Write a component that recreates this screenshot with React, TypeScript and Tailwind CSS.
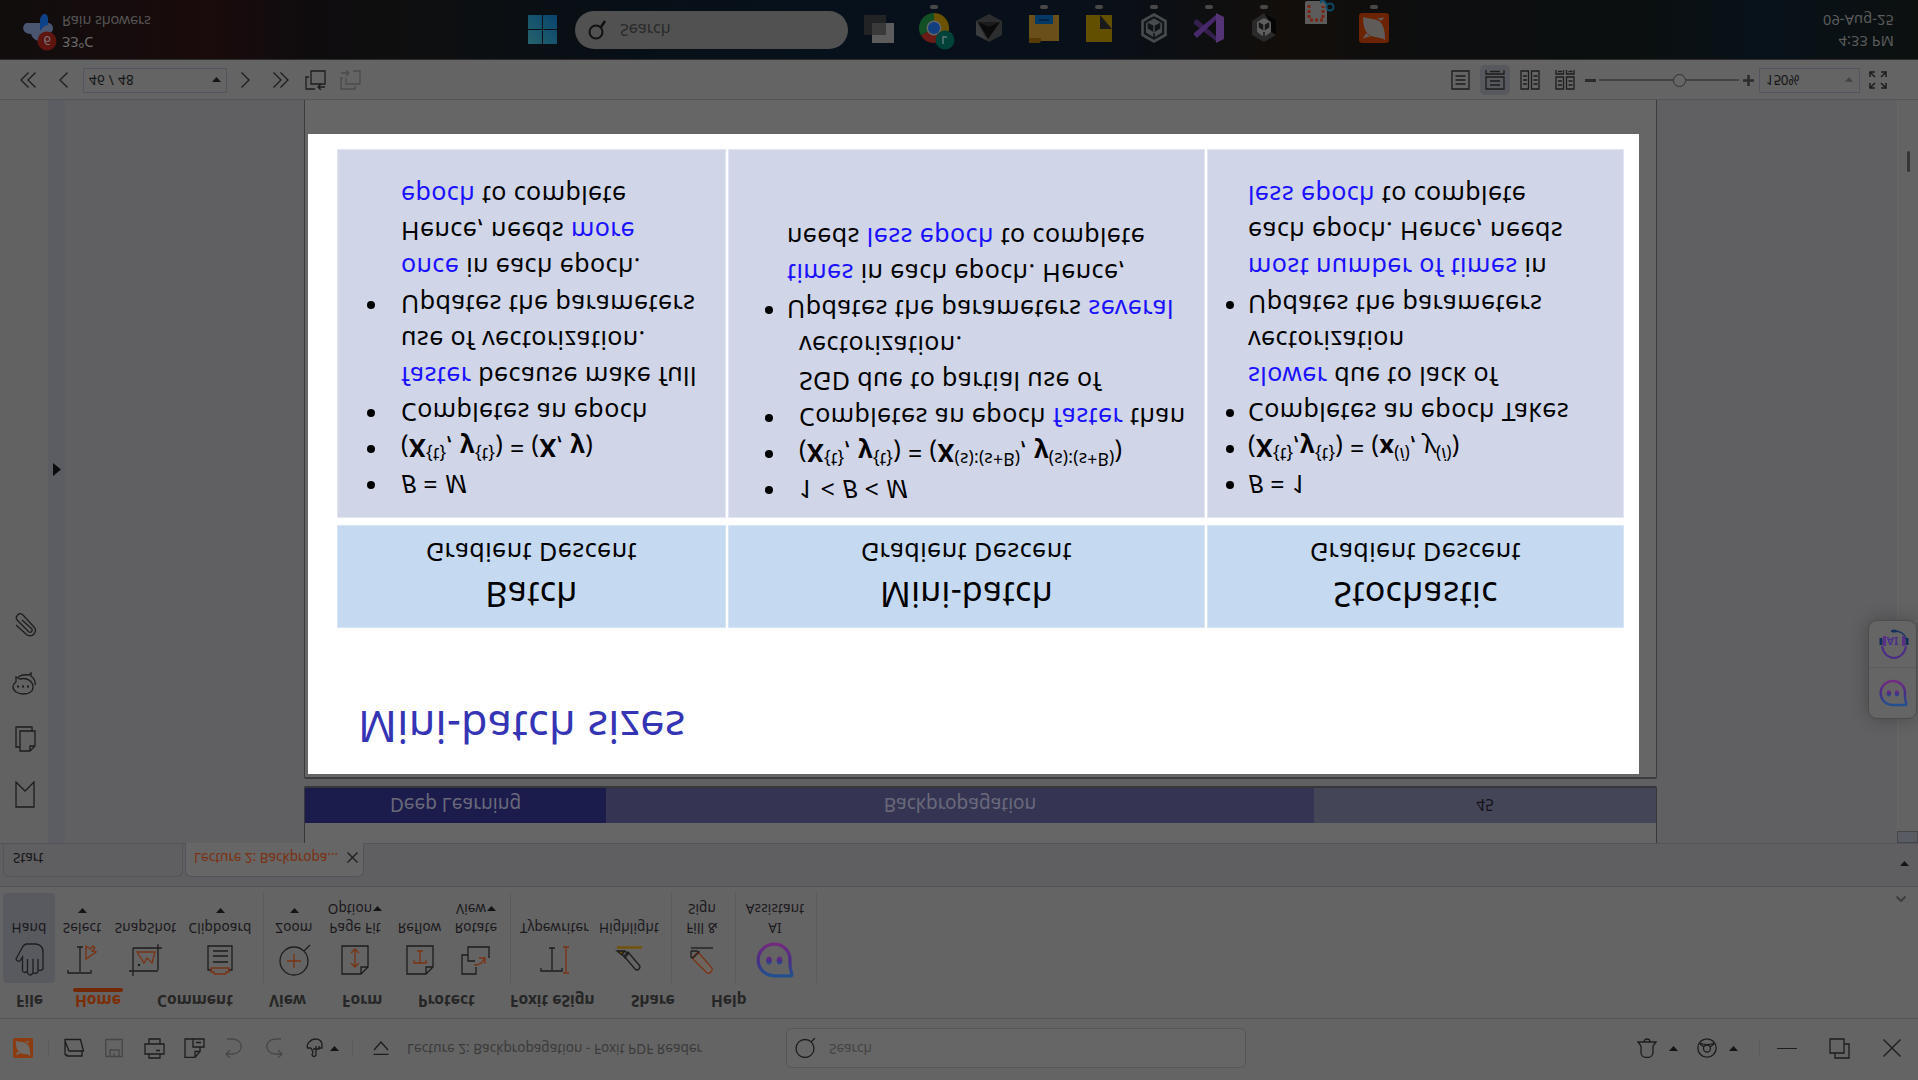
import React from "react";

type P = { children?: React.ReactNode };

/* Icons are drawn in display orientation, so they cancel the mirroring of the page. */
function Ico({ className, box, children }: P & { className: string; box: string }) {
  return (
    <svg className={"shrink-0 -scale-y-100 " + className} viewBox={box} fill="none" stroke="#1d1d1d" strokeWidth="1.3">
      {children}
    </svg>
  );
}

const Up = ({ className = "" }: { className?: string }) => (
  <Ico className={"h-[5px] w-[9px] " + className} box="0 0 9 5">
    <path d="M0 5 4.5 0 9 5Z" fill="#141414" stroke="none" />
  </Ico>
);

const Rule = ({ className = "" }: { className?: string }) => <div className={"w-px shrink-0 bg-[#5a5a5e] " + className} />;

function Bubble({ className, id }: { className: string; id: string }) {
  return (
    <Ico className={className} box="0 0 38 36">
      <defs>
        <linearGradient id={id} x1="0" y1="0" x2="0" y2="1">
          <stop offset="0" stopColor="#722a80" />
          <stop offset="0.5" stopColor="#4a2c86" />
          <stop offset="1" stopColor="#22508f" />
        </linearGradient>
      </defs>
      <path d="M18.5 2.2C27 2.2 34 9 34 17.5c0 4-.3 7 .8 10.500l1 4.500c.2 1-.3 1.300-1.300 1.300H18.500C9.500 33.800 2.200 27 2.200 18S9.500 2.200 18.500 2.200Z" stroke={"url(#" + id + ")"} strokeWidth="3.2" />
      <ellipse cx="13" cy="18.500" rx="2.800" ry="4" fill={"url(#" + id + ")"} stroke="none" />
      <ellipse cx="23.500" cy="18.500" rx="2.800" ry="4" fill={"url(#" + id + ")"} stroke="none" />
    </Ico>
  );
}

function FoxLogo({ className, bg, fg }: { className: string; bg: string; fg: string }) {
  return (
    <Ico className={className} box="0 0 30 30">
      <rect width="30" height="30" rx="3" fill={bg} stroke="none" />
      <path d="M4 4C4 13 6 20 12 23c5 2 10 1 14 4 0-9-1-15-6-19C15 5 9 6 4 4Z" fill={fg} stroke="none" />
      <path d="M4 26c1-3 2-5 4-6 1 2 2 3 4 4-3 0-5 0-8 2ZM25 4c-1 3-2 3-3 4-1-1-2-2-4-3 3 0 5 0 7-1Z" fill={fg} stroke="none" />
    </Ico>
  );
}

/* ---------- title bar ---------- */
function TitleBar() {
  return (
    <header className="flex h-[62px] items-center border-b border-[#55555d] bg-[#646464] pt-[2px]">
      <FoxLogo className="ml-[13px] h-5 w-5" bg="#8c3a10" fg="#6f6a66" />
      <Rule className="ml-[15px] h-4" />
      <Ico className="ml-[15px] h-5 w-5" box="0 0 20 20">
        <path d="M1 17V1.500h15.500L19.500 13H5L1 3M1 17h2v1h15v-5" />
      </Ico>
      <Ico className="ml-[21px] h-5 w-[18px]" box="0 0 18 20">
        <path d="M.8 1.500h16.400v17H.8ZM5 18v-6h9v6M9 15v3" stroke="#464646" />
      </Ico>
      <Ico className="ml-[21px] h-[21px] w-[21px]" box="0 0 21 21">
        <path d="M5 6V1h11v5M5 6h11M5 6H1v10h4m11 0h4V6h-4M5 16h11v4H5ZM12 12.500h4" />
      </Ico>
      <Ico className="ml-[19px] h-5 w-[21px]" box="0 0 21 20">
        <path d="M9 1H1v18.500h10l5-6h-5v6M9 1h11v8H9ZM16 13v-4M12 4.500h5" />
      </Ico>
      <Ico className="ml-[20px] h-5 w-[18px]" box="0 0 18 20">
        <path d="M2 1h6c11 1 11 14 0 15H1M5 12l-4 4 4 4" stroke="#474747" />
      </Ico>
      <Ico className="ml-[22px] h-5 w-[18px]" box="0 0 18 20">
        <path d="M16 1h-6C-1 2-1 15 10 16h7M13 12l4 4-4 4" stroke="#474747" />
      </Ico>
      <Ico className="ml-[23px] h-5 w-[17px]" box="0 0 17 20">
        <path d="M5 10H1.500C0 6 5 1 9 1c5 0 7 3 7 6v3h-3V8v3H10V8v3H7M5 10l2 4-1 3c1 2 3 2 4 0v-6" />
      </Ico>
      <Up className="ml-[7px]" />
      <Rule className="ml-[13px] h-4" />
      <Ico className="ml-[20px] h-[14px] w-[16px]" box="0 0 16 14">
        <path d="M1 9 8 1l7 8M.5 13.300h15" />
      </Ico>
      <div className="ml-[18px] w-[379px] text-[13.500px] tracking-[0.05px] text-[#3b3b3b]">Lecture 2: Backpropagation - Foxit PDF Reader</div>
      <div className="flex h-10 w-[460px] items-center rounded-[5px] border border-[#55555d] bg-[#666]">
        <Ico className="ml-[8px] h-5 w-[21px]" box="0 0 21 20">
          <circle cx="10" cy="10.500" r="9" />
          <path d="m16 4 4-4" />
        </Ico>
        <span className="ml-[13px] text-[13.500px] text-[#444]">Search</span>
      </div>
      <Ico className="ml-[391px] h-5 w-5" box="0 0 20 20">
        <path d="M1 4h18l-3 4v7c-1 6-11 6-12 0V8ZM7 4c0-4 6-4 6 0" />
      </Ico>
      <Up className="ml-[12px]" />
      <Ico className="ml-[19px] h-5 w-5" box="0 0 20 20">
        <circle cx="10" cy="10" r="9.200" />
        <circle cx="10" cy="10.500" r="3.500" />
        <path d="M3 5c4 2 10 2 14 0M3 6l4 3M17 6l-4 3" />
      </Ico>
      <Up className="ml-[12px]" />
      <Rule className="ml-[21px] h-4" />
      <div className="ml-[17px] h-px w-5 bg-[#1d1d1d]" />
      <Ico className="ml-[32px] h-[21px] w-[21px]" box="0 0 21 21">
        <path d="M1 1h14v14H1ZM15 6h5v14H6v-5" />
      </Ico>
      <Ico className="ml-[33px] h-[18px] w-[18px]" box="0 0 18 18">
        <path d="m.5.5 17 17M17.500.500.500 17.500" />
      </Ico>
    </header>
  );
}

/* ---------- menu and ribbon ---------- */
const menu: [string, string][] = [
  ["File", "w-[59px]"],
  ["Home", "w-[82px]"],
  ["Comment", "w-[112px]"],
  ["View", "w-[73px]"],
  ["Form", "w-[76px]"],
  ["Protect", "w-[92px]"],
  ["Foxit eSign", "w-[121px]"],
  ["Share", "w-[80px]"],
  ["Help", "w-[60px]"],
];

function Tool({ w, l1, l2, arrow, children, active }: P & { w: string; l1: string; l2?: string; arrow?: boolean; active?: boolean }) {
  return (
    <div className={"flex h-[90px] shrink-0 flex-col items-center rounded-[4px] " + w + (active ? " bg-[#595a60]" : "")}>
      <div className="mt-[5px] flex h-9 items-center justify-center">{children}</div>
      <div className="mt-[5px] whitespace-nowrap text-[13.500px] leading-[19px] tracking-[0.15px]">{l1}</div>
      <div className="flex h-[19px] items-center whitespace-nowrap text-[13.500px] leading-[19px] tracking-[0.15px]">
        {l2}
        {arrow && <Up className={l2 ? "ml-px" : "mb-[4px]"} />}
      </div>
    </div>
  );
}

const T = "h-9 w-9";
const B = "0 0 36 36";
const O = "#7a3213";

function Ribbon() {
  return (
    <section className="flex h-[132px] flex-col border-b border-[#515156] bg-[#646464]">
      <nav className="flex h-[35px] pl-4 text-[15.500px] font-bold leading-[34px] text-[#262626]">
        {menu.map(([t, w]) => (
          <div key={t} className={"shrink-0 whitespace-nowrap " + w}>
            {t === "Home" ? (
              <span className="relative block text-[#7c2d06]">
                Home
                <i className="absolute -left-[2px] top-[26px] h-[4px] w-[50px] rounded-full bg-[#732805]" />
              </span>
            ) : (
              t
            )}
          </div>
        ))}
      </nav>
      <div className="flex pl-[3px] text-[#1a181c]">
        <Tool w="w-[52px]" l1="Hand" active>
          <Ico className={T} box={B}>
            <path d="m5 17 6-11q2-4 5-4h9q7 1 7 8v17q-3 3-5 0V17v13q-3 3-5 0V17v14q-3 4-5.500 0V17v12q-3 3-5 0V15l-2.500 4q-3 1-4-2Z" />
          </Ico>
        </Tool>
        <Tool w="w-[54px]" l1="Select" arrow>
          <Ico className={T} box={B}>
            <path d="M16 5v25M13 5h6M4 28v3h23v-3" />
            <path d="M22 4v13l10-7-4-1 3-3-2-2-3 3Z" stroke={O} />
          </Ico>
        </Tool>
        <Tool w="w-[73px]" l1="SnapShot">
          <Ico className={T} box={B}>
            <path d="M5 6h29M5 6v28M30 2v26M1 29h29" />
            <path d="M9 10h18l-3 11-5-5-3 5Z" stroke={O} />
            <circle cx="11" cy="23" r="1.200" fill="#1d1d1d" stroke="none" />
          </Ico>
        </Tool>
        <Tool w="w-[76px]" l1="Clipboard" arrow>
          <Ico className={T} box={B}>
            <path d="M10 28H6V4h24v24h-4M11 9h15M11 14h15M11 20h15" />
            <path d="M9 26h18v4h-3v2H12v-2H9Z" stroke={O} />
          </Ico>
        </Tool>
        <Rule className="mr-[3px] ml-[5px] h-[90px]" />
        <Tool w="w-[54px]" l1="Zoom" arrow>
          <Ico className={T} box={B}>
            <circle cx="18" cy="19" r="14" />
            <path d="m28 9 6-6" />
            <path d="M11 19h14M18 12v14" stroke={O} />
          </Ico>
        </Tool>
        <Tool w="w-[68px]" l1="Page Fit" l2="Option" arrow>
          <Ico className={T} box={B}>
            <path d="M5 4h26v21l-7 7H5ZM24 32v-7h7" />
            <path d="M18 7v18M14 11l4-4 4 4M14 21l4 4 4-4" stroke={O} />
          </Ico>
        </Tool>
        <Tool w="w-[61px]" l1="Reflow">
          <Ico className={T} box={B}>
            <path d="M5 4h26v21l-7 7H5ZM24 32v-7h7" />
            <path d="M18 9v12M15 9h6M12 18v3h12v-3" stroke={O} />
          </Ico>
        </Tool>
        <Tool w="w-[52px]" l1="Rotate" l2="View" arrow>
          <Ico className={T} box={B}>
            <path d="M31 16V5H10v14h7M10 13H4v19h14v-7" />
            <path d="M16 23q8 0 10-6M21 16h6v6" stroke={O} />
          </Ico>
        </Tool>
        <Rule className="mr-[6px] ml-[8px] h-[90px]" />
        <Tool w="w-[75px]" l1="Typewriter">
          <Ico className={T} box={B}>
            <path d="M15 6v22M12 6h6M4 26v3h21v-3" />
            <path d="M29 5v26M26 5h6M26 31h6" stroke={O} />
          </Ico>
        </Tool>
        <Tool w="w-[74px]" l1="Highlight">
          <Ico className={T} box={B}>
            <path d="M6 5.500h25" stroke="#735206" strokeWidth="2.400" />
            <path d="m13 14 4-4 11 13q2 2 0 4t-4 0ZM11 12l3-3 3 3-3 4Z" />
            <path d="m6 9 7 0-2 4Z" fill="#6b4a06" />
          </Ico>
        </Tool>
        <Rule className="mr-[5px] ml-[5px] h-[90px]" />
        <Tool w="w-[50px]" l1="Fill &amp;" l2="Sign">
          <Ico className={T} box={B}>
            <path d="M7 6h22" />
            <path d="m8 16 6-6 14 16q1 2-1 4t-4 1Z" stroke={O} fill="#6e655f" />
            <path d="M7 9h6M7 9v6l2 1 6-6-2-1" />
          </Ico>
        </Tool>
        <Rule className="mr-[4px] ml-[8px] h-[90px]" />
        <Tool w="w-[70px]" l1="AI" l2="Assistant">
          <Bubble className="h-9 w-[38px]" id="bubbleRibbon" />
        </Tool>
        <Rule className="ml-[6px] h-[90px]" />
        <Ico className="mt-[81px] ml-[1079px] h-[6px] w-[10px]" box="0 0 10 6">
          <path d="m.500.500 4.500 4.500L9.500.500" stroke="#3d3d3d" strokeWidth="2" />
        </Ico>
      </div>
    </section>
  );
}

function DocTabs() {
  return (
    <div className="flex h-[43px] items-end border-b border-[#535358] bg-[#5f5f61] pl-[3px] text-[13.500px]">
      <div className="h-[33px] w-[180px] rounded-t-[6px] border border-b-0 border-[#53535c] pl-[9px] leading-[37px] text-[#151517]">Start</div>
      <div className="-mb-px ml-[2px] flex h-[34px] w-[179px] items-center rounded-t-[6px] border border-b-0 border-[#53535c] bg-[#666] pt-[4px] pl-[8px] text-[#7c3010]">
        <span className="w-[153px] whitespace-nowrap">Lecture 2: Backpropa...</span>
        <Ico className="h-[11px] w-[11px]" box="0 0 11 11">
          <path d="m.5.5 10 10M10.500.500.500 10.500" />
        </Ico>
      </div>
      <Up className="mb-[17px] ml-[1536px]" />
    </div>
  );
}

/* ---------- slide ---------- */
const Em = ({ children }: P) => <span className="text-[#1a10ff]">{children}</span>;
const Sup = ({ children }: P) => <span className="align-[9px] text-[17.500px] leading-[0] tracking-[0.2px]">{children}</span>;

function Item({ children, pad = "" }: P & { pad?: string }) {
  return (
    <li className={"flex " + pad}>
      <i className="mt-[13.500px] h-[8px] w-[8px] shrink-0 rounded-full bg-black" />
      <div className="whitespace-nowrap">{children}</div>
    </li>
  );
}

function Head({ name }: { name: string }) {
  return (
    <div className="flex flex-col items-center border border-[#d7e5f5] bg-[#c5d9f0] pt-[10px]">
      <div className="text-[34px] leading-[44px] tracking-[0.3px]">{name}</div>
      <div className="text-[25px] leading-[41px] tracking-[0.45px]">Gradient Descent</div>
    </div>
  );
}

function Slide() {
  return (
    <div className="h-[640px] w-[1331px] bg-white text-black">
      <h1 className="h-[146px] pt-[20px] pl-[50px] text-[43px] leading-[54px] tracking-[0.3px] text-[#3434b4]">Mini-batch sizes</h1>
      <div className="ml-[29px] grid grid-cols-[389px_477px_417px] grid-rows-[103px_369px] gap-x-[2px] gap-y-[7px]">
        <Head name="Batch" />
        <Head name="Mini-batch" />
        <Head name="Stochastic" />
        <ul className="border border-[#e2e6f2] bg-[#d0d6e8] pt-[14px] pl-[29px] text-[25px] leading-[36.100px] tracking-[0.39px]">
          <Item><div className="ml-[26px]"><i>B</i> = <i>M</i></div></Item>
          <Item><div className="ml-[26px]">(<b>X</b><Sup>{"{t}"}</Sup>, <b>y</b><Sup>{"{t}"}</Sup>) = (<b>X</b>, <b>y</b>)</div></Item>
          <Item><div className="ml-[26px]">Completes an epoch<br /><Em>faster</Em> because make full<br />use of vectorization.</div></Item>
          <Item><div className="ml-[26px]">Updates the parameters<br /><Em>once</Em> in each epoch.<br />Hence, needs <Em>more</Em><br /><Em>epoch</Em> to complete</div></Item>
        </ul>
        <ul className="border border-[#e2e6f2] bg-[#d0d6e8] pt-[9px] pl-[36px] text-[25px] leading-[36px] tracking-[0.39px]">
          <Item><div className="ml-[26px]">1 &lt; <i>B</i> &lt; <i>M</i></div></Item>
          <Item><div className="ml-[26px]">(<b>X</b><Sup>{"{t}"}</Sup>, <b>y</b><Sup>{"{t}"}</Sup>) = (<b>X</b><Sup>(s):(s+B)</Sup>, <b>y</b><Sup>(s):(s+B)</Sup>)</div></Item>
          <Item><div className="ml-[26px]">Completes an epoch <Em>faster</Em> than<br />SGD due to partial use of<br />vectorization.</div></Item>
          <Item><div className="ml-[14px]">Updates the parameters <Em>several</Em><br /><Em>times</Em> in each epoch. Hence,<br />needs <Em>less epoch</Em> to complete</div></Item>
        </ul>
        <ul className="border border-[#e2e6f2] bg-[#d0d6e8] pt-[14px] pl-[18px] text-[25px] leading-[36.100px] tracking-[0.39px]">
          <Item><div className="ml-[14px]"><i>B</i> = 1</div></Item>
          <Item><div className="ml-[14px]">(<b>X</b><Sup>{"{t}"}</Sup>,<b>y</b><Sup>{"{t}"}</Sup>) = (<b>x</b><Sup>(<i>i</i>)</Sup>, <i>y</i><Sup>(<i>i</i>)</Sup>)</div></Item>
          <Item><div className="ml-[14px]">Completes an epoch Takes<br /><Em>slower</Em> due to lack of<br />vectorization</div></Item>
          <Item><div className="ml-[14px]">Updates the parameters<br /><Em>most number of times</Em> in<br />each epoch. Hence, needs<br /><Em>less epoch</Em> to complete</div></Item>
        </ul>
      </div>
    </div>
  );
}

function Body() {
  return (
    <main className="flex h-[743px] overflow-hidden bg-[#606062]">
      <aside className="flex w-[48px] flex-col items-center bg-[#626262] pt-[35px]">
        <Ico className="ml-[2px] h-[27px] w-5" box="0 0 20 27">
          <path d="M1 26V1l9 9 9-9v25Z" />
        </Ico>
        <Ico className="mt-[29px] ml-[3px] h-[26px] w-[21px]" box="0 0 21 26">
          <path d="M5 5h15v15l-5 5H5ZM15 25v-5h5M17 5V1H1v20h4" />
        </Ico>
        <Ico className="mt-[31px] h-[23px] w-[24px]" box="0 0 24 23">
          <path d="M4 10V5l4 2c8-2 13 3 13 8s-5 7-10 7-10-3-10-7q0-3 3-5M6 5q5-3 11-2l2-2v3q5 4 4 9" />
          <path d="M5 14.500h2M10 14.500h2M15 14.500h2" strokeWidth="2" />
        </Ico>
        <Ico className="mt-[35px] ml-[4px] h-[24px] w-[22px]" box="0 0 22 24">
          <path d="m1 12 11 10q4 2 7-1 3-4 0-7L8 2Q4-1 2 3q-2 2 1 5l11 11q2 1 3-1l0-2L7 7" />
        </Ico>
      </aside>
      <div className="flex w-[17px] items-start justify-center bg-[#5c5d62] pt-[367px]">
        <Ico className="h-[13px] w-[8px]" box="0 0 8 13">
          <path d="M0 0 8 6.500 0 13Z" fill="#0c0c0c" stroke="none" />
        </Ico>
      </div>
      <div className="ml-[239px] w-[1353px]">
        <div className="h-[57px] rounded-b-[2px] border-x border-b-2 border-[#37373b] bg-[#666] pt-[20px] text-[19px] leading-[37px] text-[#69697a]">
          <div className="flex h-[35px] text-center">
            <div className="w-[301px] bg-[#1b1b4c]">Deep Learning</div>
            <div className="w-[708px] bg-[#353553]">Backpropagation</div>
            <div className="flex-1 bg-[#454558] text-[15.500px] text-[#131318]">45</div>
          </div>
        </div>
        <div className="mt-[7px] h-[690px] rounded-t-[2px] border-x border-t-2 border-[#3c3c40] bg-[#666] pt-[3px] pl-[3px]">
          <Slide />
        </div>
      </div>
      <div className="flex-1" />
      <div className="relative flex w-[21px] flex-col items-center border-l border-[#686868] bg-[#636363]">
        <div className="-ml-px h-[12px] w-[21px] border border-[#45464c] bg-[#5a5c64]" />
        <div className="mt-[659px] h-[21px] w-[3px] rounded-full bg-[#363638]" />
        <div className="absolute top-[124px] right-px flex h-[99px] w-[49px] flex-col items-center rounded-[9px] border border-[#4c4c4e] bg-[#656565] shadow-[0_0_18px_rgba(0,0,0,0.25)]">
          <div className="flex h-[50px] items-center pl-[2px]">
            <Bubble className="h-[28px] w-[29px]" id="bubbleSide" />
          </div>
          <div className="h-px w-full bg-[#5c5c5c]" />
          <div className="relative flex flex-1 items-center pl-[2px]">
            <Ico className="h-[30px] w-[30px]" box="0 0 30 30">
              <path d="M3 17c1 7 6 12 12 12s11-5 12-12" stroke="#4c2c84" strokeWidth="2" />
              <path d="M15 2q10 0 12 8" stroke="#1b3566" strokeWidth="1.500" />
              <ellipse cx="15" cy="2" rx="3" ry="1.500" fill="#14305e" stroke="none" />
              <path d="M2 9v7M28 9v7" stroke="#122c5c" strokeWidth="3" />
              <path d="M5.500 7v10M24.500 7v10" stroke="#5c2f86" strokeWidth="3" />
            </Ico>
            <span className="absolute top-[16px] left-[10px] text-[11px] leading-[20px] font-bold text-[#4a3088]">AI</span>
          </div>
        </div>
      </div>
    </main>
  );
}

/* ---------- status bar ---------- */
function StatusBar() {
  return (
    <div className="flex h-10 items-center border-t border-[#55565a] bg-[#646464] pb-[2px] text-[13.500px] text-[#151515]">
      <Ico className="ml-5 h-4 w-4" box="0 0 16 16"><path d="M8.500.500 1 8l7.500 7.500M15.500.500 8 8l7.500 7.500" /></Ico>
      <Ico className="ml-[23px] h-4 w-[9px]" box="0 0 9 16"><path d="M8.500.500 1 8l7.500 7.500" /></Ico>
      <div className="ml-[15px] flex h-[25px] w-[144px] items-center border border-[#54545e] pt-px pl-[5px] tracking-[0.3px]">
        <span className="w-[123px]">46 / 48</span>
        <Up />
      </div>
      <Ico className="ml-[14px] h-4 w-[9px]" box="0 0 9 16"><path d="M.5.5 8 8 .500 15.500" /></Ico>
      <Ico className="ml-[23px] h-4 w-4" box="0 0 16 16"><path d="M.5.5 8 8 .500 15.500M7.500.500 15 8l-7.500 7.500" /></Ico>
      <Ico className="ml-[16px] h-5 w-[21px]" box="0 0 21 20">
        <path d="M6 1h14v13H6ZM4 7H1v12h9M20 17h-7M16 14l-3 3 3 3" />
      </Ico>
      <Ico className="ml-[14px] h-5 w-[21px]" box="0 0 21 20">
        <path d="M13 1h7v13H6V8M3 8H1v11h14v-3M1 3h8M6 0l3 3-3 3" stroke="#4b4b4b" />
      </Ico>
      <Ico className="ml-[1090px] h-5 w-[19px]" box="0 0 19 20">
        <path d="M1 1h17v18H1ZM4.500 6h10M4.500 10h10M4.500 14h10" />
      </Ico>
      <div className="ml-[10px] flex h-[30px] w-[30px] items-center justify-center rounded-[5px] bg-[#58595f]">
        <Ico className="h-5 w-5" box="0 0 20 20">
          <path d="M1 0v4h18V0M5 1.500h10M1 7h18v12H1ZM5 11h10M5 15h10" />
        </Ico>
      </div>
      <Ico className="ml-[10px] h-5 w-5" box="0 0 20 20">
        <path d="M1 1h7.500v18H1ZM11.500 1H19v18h-7.500ZM3 6h4M3 10h4M3 14h4M13.500 6h4M13.500 10h4M13.500 14h4" />
      </Ico>
      <Ico className="ml-[15px] h-5 w-5" box="0 0 20 20">
        <path d="M1 0v4h7.500V0M11.500 0v4H19V0M3 1.500h4M13.500 1.500h4M1 7h7.500v12H1ZM11.500 7H19v12h-7.500ZM3 11h4M3 15h4M13.500 11h4M13.500 15h4" />
      </Ico>
      <div className="ml-[10px] h-[3px] w-[11px] bg-[#2b2b2b]" />
      <div className="ml-[3px] h-[2px] w-[74px] bg-[#434343]" />
      <div className="h-[13px] w-[13px] rounded-full border-[1.500px] border-[#303030] bg-[#666]" />
      <div className="h-[2px] w-[53px] bg-[#434343]" />
      <Ico className="ml-[4px] h-[11px] w-[11px]" box="0 0 11 11"><path d="M0 5.500h11M5.500 0v11" stroke="#2b2b2b" strokeWidth="2.500" /></Ico>
      <div className="ml-[5px] flex h-[25px] w-[101px] items-center border border-[#54545e] pt-px pl-[6px] tracking-[-0.3px]">
        <span className="w-[79px]">150%</span>
        <Ico className="h-[5px] w-[8px]" box="0 0 9 5"><path d="M0 5 4.500 0 9 5Z" fill="#434343" stroke="none" /></Ico>
      </div>
      <Ico className="ml-[9px] h-[18px] w-[18px]" box="0 0 18 18">
        <path d="M1 6V1h5M1 1l5 5M12 1h5v5M17 1l-5 5M1 12v5h5M1 17l5-5M12 17h5v-5M17 17l-5-5" strokeWidth="1.500" />
      </Ico>
    </div>
  );
}

/* ---------- taskbar ---------- */
function App({ children, dot = true }: P & { dot?: boolean }) {
  return (
    <div className="flex w-[55px] flex-col items-center">
      <div className="mt-[15px] flex h-[31px] items-center">{children}</div>
      {dot && <i className="mt-[4px] h-[4px] w-[8px] rounded-full bg-[#484848]" />}
    </div>
  );
}

const A = "h-[30px] w-[30px]";
const V = "0 0 30 30";

function Taskbar() {
  return (
    <footer className="flex h-[60px] border-t border-[#2c2a2a] bg-[linear-gradient(90deg,#110d0d_0%,#1a0b0c_11%,#0f0c0e_16%,#0e0f10_22%,#080f15_30%,#07111b_42%,#08101a_56%,#0d0f12_62%,#130e0a_67%,#0d0e0f_74%,#0b0f0f_85%,#08121a_92%,#0c100f_100%)]">
      <div className="mt-[6px] ml-[22px] h-[42px] w-[36px] shrink-0">
        <Ico className="h-[42px] w-[36px]" box="0 0 36 42">
          <path d="M5 12h22q4 1 4 6-1 5-6 5-2 7-8 7-6-1-8-7-7 0-8-6 1-5 4-5Z" fill="#4a5570" stroke="none" />
          <path d="M18 20V8q2-5 4-5 4 0 4 5v6q-4 0-8 6Z" fill="#0d4289" stroke="none" />
          <circle cx="25" cy="30" r="9.500" fill="#5e150f" stroke="none" />
        </Ico>
        <div className="relative -top-[40px] left-[21.500px] text-[13px] leading-[20px] text-[#777]">6</div>
      </div>
      <div className="mt-[6px] ml-[4px] w-[466px] text-[14.500px] leading-[21px] tracking-[-0.15px]">
        <div className="text-[#6b6b6b]">33°C</div>
        <div className="text-[#555]">Rain showers</div>
      </div>
      <Ico className="mt-[15px] h-[30px] w-[29px]" box="0 0 29 30">
        <defs>
          <linearGradient id="win" x1="1" y1="0" x2="0" y2="1">
            <stop offset="0" stopColor="#07436e" />
            <stop offset="1" stopColor="#26646c" />
          </linearGradient>
        </defs>
        <path d="M0 1h14v14H0ZM15 1h14v14H15ZM0 16h14v14H0ZM15 16h14v14H15Z" fill="url(#win)" stroke="none" />
      </Ico>
      <div className="mt-[10px] ml-[18px] flex h-[38px] w-[273px] shrink-0 items-center rounded-full bg-[#515151] text-[16px] text-[#2a2a2a]">
        <Ico className="ml-[13px] h-5 w-[19px]" box="0 0 19 20">
          <circle cx="8" cy="12" r="6.500" stroke="#111" strokeWidth="2" />
          <path d="m13 7 4-6" stroke="#111" strokeWidth="2.500" />
        </Ico>
        <span className="ml-[13px]">Search</span>
      </div>
      <div className="ml-[3px] flex">
        <App dot={false}>
          <Ico className={A} box={V}>
            <path d="M0 2h22v20H0Z" fill="#222324" stroke="none" />
            <path d="M8 10h22v20H8Z" fill="#5c5c5c" stroke="none" />
            <path d="M8 10h14v12H8Z" fill="#3a3a3a" stroke="none" />
          </Ico>
        </App>
        <App>
          <Ico className="h-[37px] w-[36px] translate-x-[3px] translate-y-[-3px]" box="0 0 36 37">
            <path d="M15 15V0a15 15 0 0 1 13 22.500Z" fill="#6b5200" stroke="none" />
            <path d="M15 15 2 22.500A15 15 0 0 1 15 0Z" fill="#124f24" stroke="none" />
            <path d="M15 15 2 22.500a15 15 0 0 0 26 0Z" fill="#6a1b16" stroke="none" />
            <circle cx="15" cy="15" r="7.500" fill="#666" stroke="none" />
            <circle cx="15" cy="15" r="6" fill="#123f80" stroke="none" />
            <circle cx="26" cy="27" r="9.500" fill="#014238" stroke="none" />
            <path d="M24 31v-7h4" stroke="#5d7a75" strokeWidth="1.500" />
          </Ico>
        </App>
        <App dot={false}>
          <Ico className={A} box={V}>
            <path d="m15 1 13 7v14l-13 7-13-7V8Z" fill="#2c2d2e" stroke="none" />
            <path d="M2 8 13 27 2 22Z" fill="#3c3d3e" stroke="none" />
            <path d="M4 9h22L14 26Z" fill="#0a0a0a" stroke="none" />
            <path d="M4 9h22l-11 5Z" fill="#1b1b1b" stroke="none" />
          </Ico>
        </App>
        <App>
          <Ico className={A} box={V}>
            <path d="M0 2h30v26H12l-2 2H0Z" fill="#6b4f18" stroke="none" />
            <path d="M0 25h12v3l-2 2H0Z" fill="#573a05" stroke="none" />
            <path d="M6 2h18v9H6Z" fill="#043a68" stroke="none" />
            <path d="M10 7h10" stroke="#021c38" />
          </Ico>
        </App>
        <App>
          <Ico className={A} box={V}>
            <path d="M2 2h26v27H2Z" fill="#625000" stroke="none" />
            <path d="M15 2v13h13V2Z" fill="#625000" stroke="none" />
            <path d="M16 2v14h12Z" fill="#1b1a1a" stroke="none" />
          </Ico>
        </App>
        <App>
          <Ico className={A} box={V}>
            <path d="m15 1.500 11.500 6.500v14L15 28.500 3.500 22V8Z" stroke="#484b4e" strokeWidth="2.600" fill="#121518" />
            <path d="m15 5.500 8 4.500v9.500l-8 5-8-5V10Z" fill="#484b4e" stroke="none" />
            <path d="M9.500 11v4l4 2.500v-4.500ZM20.500 11v4l-4 2.500v-4.500ZM15 20v6M12 5l-5 4M18 5l5 4" stroke="#121518" fill="#121518" strokeWidth="1.600" />
          </Ico>
        </App>
        <App>
          <Ico className={A} box={V}>
            <path d="m0 8 3-2 20 18v5L0 11Z" fill="#33204d" stroke="none" />
            <path d="m0 22 3 3L23 6V1L0 20Z" fill="#47296b" stroke="none" />
            <path d="m22 0 8 4v22l-8 4Z" fill="#543476" stroke="none" />
          </Ico>
        </App>
        <App>
          <Ico className={A} box={V}>
            <path d="m15 0 12 7v15l-12 7-12-7V8Z" fill="#292929" stroke="none" />
            <path d="m15 0 12 7v15l-6-4V9Z" fill="#050505" stroke="none" />
            <path d="m15 5 7 4v10l-7 5-7-5V9Z" fill="#5e5e5e" stroke="none" />
            <path d="M10.500 10.500v3.500l3 2v-4ZM19.500 10.500v3.500l-3 2v-4ZM15 19v5" stroke="#1a1a1a" fill="#1a1a1a" strokeWidth="1.500" />
          </Ico>
        </App>
        <App dot={false}>
          <Ico className="h-[30px] w-[32px] translate-y-[17px]" box="0 0 32 30">
            <path d="M2 7q0-2 2-2h16l4 4v19H2Z" fill="#5c5c5c" stroke="none" />
            <path d="M7 24h13V10" stroke="#7a2414" strokeWidth="3" strokeDasharray="3 2" />
            <path d="M6 9v15" stroke="#7a2414" strokeWidth="3" strokeDasharray="3 2" />
            <circle cx="27" cy="11" r="3.500" stroke="#0c4a66" strokeWidth="2" />
            <path d="m24 8-6-6M18 7V0" stroke="#0c4a66" strokeWidth="2" />
          </Ico>
        </App>
        <App>
          <FoxLogo className={A} bg="#6b2300" fg="#5f5b58" />
        </App>
      </div>
      <div className="mt-[7px] mr-[24px] ml-auto text-right text-[14.500px] leading-[21px] tracking-[0.15px] text-[#5c5c5c]">
        <div>4:33 PM</div>
        <div>09-Aug-25</div>
      </div>
    </footer>
  );
}

export default function Desktop() {
  return (
    <div className="h-[1080px] w-[1918px] -scale-y-100 overflow-hidden bg-[#646464] font-['Noto_Sans','Open_Sans',sans-serif]">
      <TitleBar />
      <Ribbon />
      <DocTabs />
      <Body />
      <StatusBar />
      <Taskbar />
    </div>
  );
}
